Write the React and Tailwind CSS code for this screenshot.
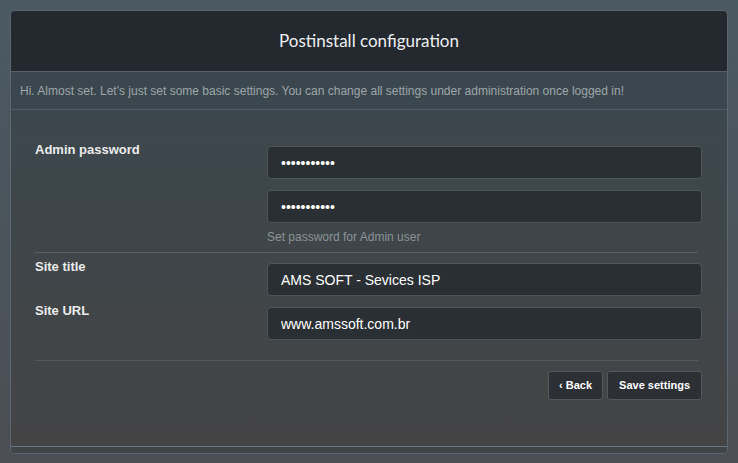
import React from "react";

const font = { fontFamily: '"Liberation Sans", Arial, sans-serif' };

function Field({ value, type = "text" }) {
  return (
    <input
      type={type}
      defaultValue={value}
      readOnly
      className="w-full h-[33px] rounded-[4px] border border-[#4d555b] bg-[#2a2f33] px-[13px] text-[14px] text-white outline-none"
      style={font}
    />
  );
}

export default function App() {
  return (
    <div className="min-h-screen w-full bg-gradient-to-b from-[#4a5a63] to-[#4b4e54] p-[10px]" style={font}>
      <div className="w-[718px] rounded-[5px] border border-[#5b6770] overflow-hidden">
        <div className="h-[61px] bg-[#23292e] flex items-center justify-center border-b border-[#56626b]">
          <span className="text-[17px] text-[#eef0f1]" style={{ fontFamily: "Lato, sans-serif" }}>
            Postinstall configuration
          </span>
        </div>
        <div className="h-[38px] bg-[#3b474e] flex items-center px-[9px] border-b border-[#4f5a62]">
          <span className="text-[12px] text-[#9ea5a9]">
            Hi. Almost set. Let's just set some basic settings. You can change all settings under administration once logged in!
          </span>
        </div>
        <div className="bg-gradient-to-b from-[#3c474d] to-[#444445] pl-[24px] pr-[25px] pt-[32px] pb-[46px]">
          <div className="flex items-start">
            <div className="w-[232px] text-[13px] font-bold text-[#ececec] leading-[15px]">Admin password</div>
            <div className="flex-1 mt-[4px] flex flex-col">
              <Field type="password" value="xxxxxxxxxxx" />
              <div className="mt-[11px]">
                <Field type="password" value="xxxxxxxxxxx" />
              </div>
              <div className="mt-[7px] text-[12px] leading-[14px] text-[#8c9296]">Set password for Admin user</div>
            </div>
          </div>
          <div className="mt-[8px] mr-[4px] border-t border-[#585d61]" />
          <div className="flex items-start mt-[6px]">
            <div className="w-[232px] text-[13px] font-bold text-[#ececec] leading-[15px]">Site title</div>
            <div className="flex-1 mt-[4px]">
              <Field value="AMS SOFT - Sevices ISP" />
            </div>
          </div>
          <div className="flex items-start mt-[7px]">
            <div className="w-[232px] text-[13px] font-bold text-[#ececec] leading-[15px]">Site URL</div>
            <div className="flex-1 mt-[4px]">
              <Field value="www.amssoft.com.br" />
            </div>
          </div>
          <div className="mt-[20px] mr-[4px] border-t border-[#55595c]" />
          <div className="mt-[10px] flex justify-end gap-[4px]">
            <button className="h-[29px] pl-[10px] pr-[10px] rounded-[3px] border border-[#52585d] bg-[#2c3034] text-[11px] font-bold text-white">
              ‹ Back
            </button>
            <button className="h-[29px] pl-[11px] pr-[11px] rounded-[3px] border border-[#52585d] bg-[#2c3034] text-[11px] font-bold text-white">
              Save settings
            </button>
          </div>
        </div>
        <div className="h-[7px] bg-[#404447] border-t border-[#6a7886]" />
      </div>
    </div>
  );
}
